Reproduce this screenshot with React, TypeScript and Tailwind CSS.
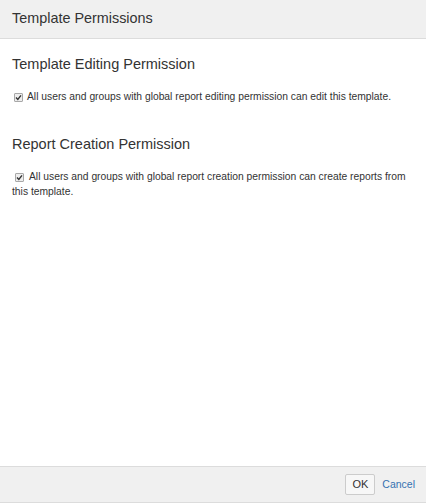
import React from "react"

// Small old-style checked box
function CheckMark() {
    return (
        <span className="inline-flex items-center justify-center w-[9px] h-[9px] border border-[#a8a8a8] rounded-[1px] bg-[#eeeeee] align-[-1px]">
            <svg width="7" height="7" viewBox="0 0 7 7">
                <path d="M1 3.6 L2.8 5.4 L6 1.4" fill="none" stroke="#333" strokeWidth="1.4" />
            </svg>
        </span>
    )
}

function PermissionSection({ title, label, boxClass }: { title: string; label: string; boxClass: string }) {
    return (
        <section>
            <h2 className="text-[14.5px] leading-[18px] text-[#333] mb-[16px]">{title}</h2>
            <label className="block text-[10.3px] leading-[15px] text-[#333]">
                <span className={boxClass}>
                    <CheckMark />
                </span>
                {label}
            </label>
        </section>
    )
}

export default function App() {
    return (
        <div className="w-[426px] h-[504px] flex flex-col bg-white font-['Liberation_Sans',Arial,sans-serif]">
            {/* Dialog header */}
            <div className="h-[39px] shrink-0 bg-[#f0f0f0] border-b border-[#dcdcdc] flex items-center px-[12px]">
                <h1 className="text-[14.4px] text-[#333]">Template Permissions</h1>
            </div>

            {/* Body */}
            <div className="flex-1 px-[12px] pt-[16px] flex flex-col gap-[31px]">
                <PermissionSection
                    title="Template Editing Permission"
                    label="All users and groups with global report editing permission can edit this template."
                    boxClass="ml-[2px] mr-[4px]"
                />
                <PermissionSection
                    title="Report Creation Permission"
                    label="All users and groups with global report creation permission can create reports from this template."
                    boxClass="ml-[3px] mr-[5px]"
                />
            </div>

            {/* Footer */}
            <div className="h-[37px] shrink-0 mb-[1px] bg-[#f0f0f0] border-t border-b border-[#dcdcdc] flex items-center justify-end gap-[7px] pr-[11px]">
                <button className="h-[21px] px-[6px] text-[11px] text-[#333] bg-[#f7f7f7] border border-[#ccc] rounded-[2px]">
                    OK
                </button>
                <a className="text-[10.5px] text-[#3572b0]">Cancel</a>
            </div>
        </div>
    )
}
